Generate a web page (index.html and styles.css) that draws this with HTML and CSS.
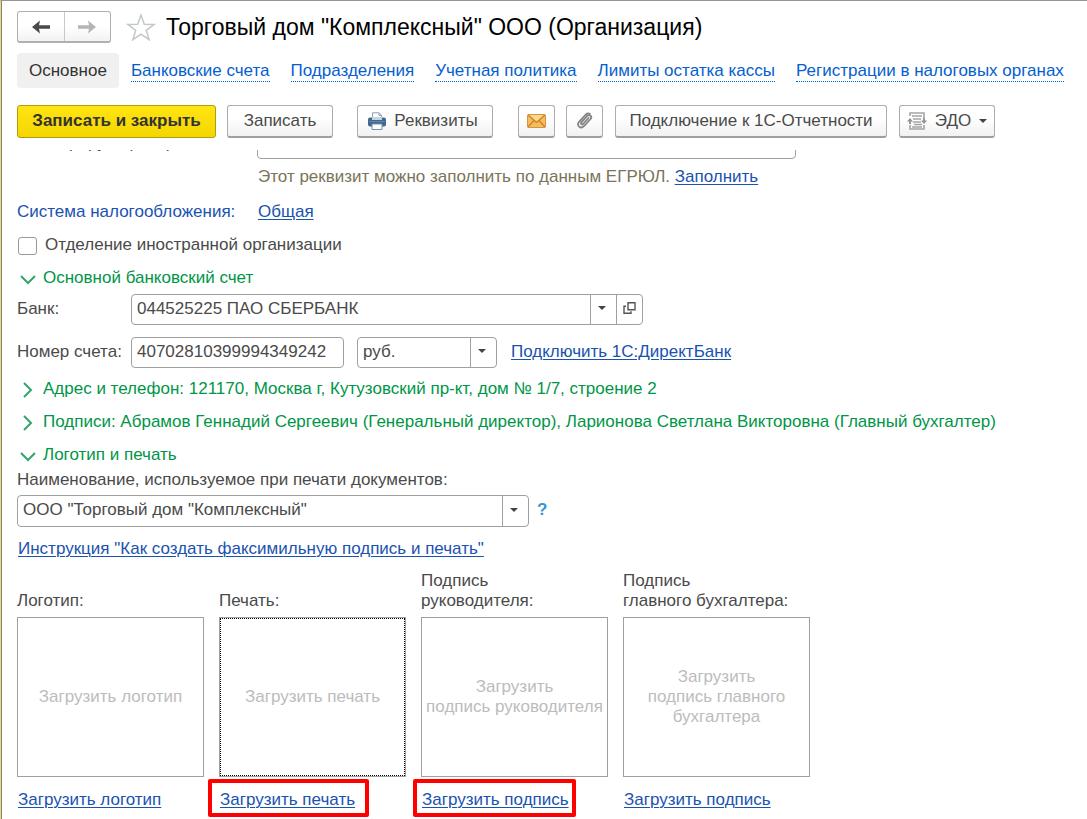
FILE: index.html
```html
<!DOCTYPE html>
<html lang="ru">
<head>
<meta charset="utf-8">
<meta name="viewport" content="width=device-width, initial-scale=1">
<title>Торговый дом "Комплексный" ООО (Организация)</title>
<link rel="stylesheet" href="styles.css">
</head>
<body>
<div class="window">
  <header class="titlebar">
    <div class="history">
      <button class="history-btn" type="button" aria-label="Назад"><svg width="18" height="14" viewBox="0 0 18 14"><path d="M0 7l8-6.500L7 5.200h11v3.600H7l1 4.700z" fill="#4a4a4a"/></svg></button>
      <button class="history-btn" type="button" aria-label="Вперед"><svg width="18" height="14" viewBox="0 0 18 14"><path d="M18 7l-8-6.500 1 4.700H0v3.600h11l-1 4.700z" fill="#b5b5b5"/></svg></button>
    </div>
    <button class="star" type="button" aria-label="В избранное"><svg width="30" height="28" viewBox="0 0 30 28"><path d="M15 2l3.300 9.200 10 .2-8 6 2.800 9.300-8.100-5.600-8.100 5.600 2.800-9.300-8-6 10-.2z" fill="#fff" stroke="#c3c8c8" stroke-width="1.500"/></svg></button>
    <h1 class="title">Торговый дом "Комплексный" ООО (Организация)</h1>
  </header>

  <nav class="tabs">
    <span class="tab-current">Основное</span>
    <a class="tab" href="#">Банковские счета</a>
    <a class="tab" href="#">Подразделения</a>
    <a class="tab" href="#">Учетная политика</a>
    <a class="tab" href="#">Лимиты остатка кассы</a>
    <a class="tab" href="#">Регистрации в налоговых органах</a>
  </nav>

  <div class="toolbar">
    <button class="btn btn-primary" type="button">Записать и закрыть</button>
    <button class="btn btn-save" type="button">Записать</button>
    <button class="btn btn-print" type="button"><svg width="18" height="18" viewBox="0 0 18 18"><path d="M4.500 7V.8h6.500l2.500 2.500V7" fill="#fff" stroke="#8ba0b5"/><path d="M11 .8v2.700h2.500" fill="none" stroke="#8ba0b5"/><rect x="0" y="5.500" width="18" height="9" rx="2" fill="#41698f"/><path d="M4 5h10v3H4z" fill="#c3d3e2"/><path d="M1.500 9.500h15" stroke="#6288ac"/><path d="M4 12h10v5.500H4z" fill="#fff" stroke="#7890a8"/></svg>Реквизиты</button>
    <div class="icon-group">
      <button class="btn btn-icon" type="button" aria-label="Написать письмо"><svg width="19" height="14" viewBox="0 0 19 14"><rect x=".5" y=".5" width="18" height="13" rx="1" fill="#f5bd5e" stroke="#d5933b"/><path d="M1 1l8.500 7.500L18 1M1 13l6-6.500M18 13l-6-6.500" fill="none" stroke="#cb822b" stroke-width="1.200"/><path d="M2.500 1h14l-7 6z" fill="#ffdb91"/></svg></button>
      <button class="btn btn-icon" type="button" aria-label="Присоединенные файлы"><svg width="18" height="18" viewBox="0 0 18 18"><path d="M12.500 6l-5.500 6c-1.100 1.100-2.700-.4-1.700-1.600L11.200 4c2.400-2.300 5.400.6 3.300 3L8 14.200c-3.400 3.300-8-.9-4.800-4.500l6.600-7.200c1.300-1.300 2.700-1.500 4-.7" fill="none" stroke="#858585" stroke-width="1.800" stroke-linecap="round"/></svg></button>
    </div>
    <button class="btn btn-report" type="button">Подключение к 1С-Отчетности</button>
    <button class="btn btn-edo" type="button"><svg width="20" height="18" viewBox="0 0 20 18"><path d="M3 4V1h14v5M3 13v4h14v-4" fill="none" stroke="#a5a5a5" stroke-width="1.600"/><path d="M5 4h10M6 7h8M6 10h8M7 12.500h8M5 15h10" stroke="#a5a5a5" stroke-width="1.500"/><path d="M3 12V8M17 6v4" stroke="#999" stroke-width="2"/><path d="M0 9.500L3 6l3 3.500zM14 8.500h6L17 12z" fill="#949494"/></svg>ЭДО<span class="caret"></span></button>
  </div>

  <main class="form">
    <div class="cut-row"><label class="label-wide" for="reg">Регистрирующий орган:</label><input class="reg-input" id="reg" type="text"></div>
    <p class="hint">Этот реквизит можно заполнить по данным ЕГРЮЛ. <a class="link" href="#">Заполнить</a></p>
    <div class="tax-row"><span class="label-wide">Система налогообложения:</span><a class="link" href="#">Общая</a></div>
    <div class="check-row"><input class="check" id="foreign" type="checkbox"><label for="foreign">Отделение иностранной организации</label></div>

    <button class="group" type="button" aria-expanded="true"><svg class="chev" viewBox="0 0 18 18"><path d="M4 7l7 7 7-7" fill="none" stroke="#36a36c" stroke-width="2"/></svg>Основной банковский счет</button>
    <div class="row bank-row">
      <label class="label" for="bank">Банк:</label>
      <div class="field bank"><input class="input" id="bank" type="text" value="044525225 ПАО СБЕРБАНК"><button class="field-btn" type="button" aria-label="Выбрать банк"><span class="caret"></span></button><button class="field-btn" type="button" aria-label="Открыть"><svg width="13" height="12" viewBox="0 0 13 12"><path d="M5 .8h7v7H5zM3 4.200H1v7h7v-2" fill="none" stroke="#555" stroke-width="1.400"/></svg></button></div>
    </div>
    <div class="row account-row">
      <label class="label" for="account">Номер счета:</label>
      <div class="field account"><input class="input" id="account" type="text" value="40702810399994349242"></div>
      <div class="field currency"><input class="input" type="text" value="руб." aria-label="Валюта"><button class="field-btn" type="button" aria-label="Выбрать валюту"><span class="caret"></span></button></div>
      <a class="link" href="#">Подключить 1С:ДиректБанк</a>
    </div>
    <button class="group" type="button" aria-expanded="false"><svg class="chev" viewBox="0 0 18 18"><path d="M7 3l7 7-7 7" fill="none" stroke="#36a36c" stroke-width="2"/></svg>Адрес и телефон: 121170, Москва г, Кутузовский пр-кт, дом № 1/7, строение 2</button>
    <button class="group" type="button" aria-expanded="false"><svg class="chev" viewBox="0 0 18 18"><path d="M7 3l7 7-7 7" fill="none" stroke="#36a36c" stroke-width="2"/></svg>Подписи: Абрамов Геннадий Сергеевич (Генеральный директор), Ларионова Светлана Викторовна (Главный бухгалтер)</button>
    <button class="group" type="button" aria-expanded="true"><svg class="chev" viewBox="0 0 18 18"><path d="M4 7l7 7 7-7" fill="none" stroke="#36a36c" stroke-width="2"/></svg>Логотип и печать</button>

    <label class="name-label" for="print-name">Наименование, используемое при печати документов:</label>
    <div class="row">
      <div class="field print-name"><input class="input" id="print-name" type="text" value="ООО &quot;Торговый дом &quot;Комплексный&quot;"><button class="field-btn" type="button" aria-label="Выбрать наименование"><span class="caret"></span></button></div>
      <button class="help" type="button">?</button>
    </div>
    <p class="guide"><a class="link" href="#">Инструкция "Как создать факсимильную подпись и печать"</a></p>

    <div class="images">
      <section class="image"><h2 class="image-label">Логотип:</h2><button class="drop" type="button">Загрузить логотип</button><a class="link" href="#">Загрузить логотип</a></section>
      <section class="image"><h2 class="image-label">Печать:</h2><button class="drop drop-focused" type="button">Загрузить печать</button><a class="link marked" href="#">Загрузить печать</a></section>
      <section class="image"><h2 class="image-label">Подпись<br>руководителя:</h2><button class="drop" type="button">Загрузить<br>подпись руководителя</button><a class="link marked marked-tight" href="#">Загрузить подпись</a></section>
      <section class="image"><h2 class="image-label">Подпись<br>главного бухгалтера:</h2><button class="drop" type="button">Загрузить<br>подпись главного<br>бухгалтера</button><a class="link" href="#">Загрузить подпись</a></section>
    </div>
  </main>
</div>
</body>
</html>
```
FILE: styles.css
```css
* { box-sizing: border-box; }
body { margin: 0; background: #fff; color: #4a4a4a; font: 17px/20px "Liberation Sans", Arial, sans-serif; }
button, input { font: inherit; color: inherit; }
button { cursor: pointer; }
p, h1, h2 { margin: 0; font-weight: normal; }
svg { flex: none; }

.window {
  min-height: 100vh;
  overflow: hidden;
  padding: 10px 0 0 16px;
  border-top: 1px solid #969696;
  border-left: 1px solid #e8d98c;
  box-shadow: inset 1px 0 0 #8c8460;
}

.titlebar { display: flex; align-items: center; height: 32px; }
.history { display: flex; width: 94px; height: 32px; border: 1px solid #b0b0b0; border-bottom: 2px solid #b0b0b0; border-radius: 3px; background: linear-gradient(#fff 50%, #f2f2f2); }
.history-btn { flex: 1; display: flex; align-items: center; justify-content: center; padding: 0; border: 0; background: none; }
.history-btn + .history-btn { border-left: 1px solid #c8c8c8; }
.star { display: flex; margin-left: 15px; padding: 0; border: 0; background: none; }
.title { margin-left: 10px; color: #000; font-size: 23px; line-height: 32px; white-space: nowrap; }

.tabs { display: flex; align-items: center; gap: 21px; margin-top: 10px; white-space: nowrap; }
.tab-current { margin-right: -9px; padding: 8px 12px 7px; border-radius: 4px; background: #f0f0f0; color: #333; }
.tab { padding-top: 2px; border-bottom: 1px dotted #0560cf; color: #0560cf; text-decoration: none; }

.toolbar { display: flex; align-items: center; margin-top: 17px; white-space: nowrap; }
.btn { display: flex; align-items: center; justify-content: center; height: 33px; padding: 0; border: 1px solid #adadad; border-bottom: 2px solid #9e9e9e; border-radius: 3px; background: linear-gradient(#fff 40%, #f1f1f1); }
.btn-primary { width: 199px; border-color: #b09c14; border-bottom-width: 1px; padding-bottom: 1px; background: linear-gradient(#ffe513, #f4d500); color: #333; font-weight: bold; }
.btn-save { width: 106px; margin-left: 11px; }
.btn-print { width: 136px; margin-left: 24px; gap: 8px; padding-right: 4px; }
.icon-group { display: flex; gap: 11px; margin: 0 12px 0 25px; }
.btn-icon { width: 37px; }
.btn-report { width: 272px; }
.btn-edo { width: 96px; margin-left: 12px; gap: 8px; }
.caret { border: 4px solid transparent; border-top-color: #444; border-bottom: 0; }

.form { margin-top: 12px; }
.cut-row { display: flex; align-items: flex-end; height: 9px; overflow: hidden; }
.label-wide { flex: none; width: 240px; }
.cut-row .label-wide { margin-bottom: 6px; }
.reg-input { width: 539px; height: 32px; border: 1px solid #a0a0a0; border-radius: 4px; }
.hint { margin: 8px 0 0 241px; color: #7a745a; }
.link { color: #1a52b0; text-decoration: underline; text-decoration-thickness: 1px; text-underline-offset: 2px; }
.tax-row { display: flex; margin-top: 15px; color: #1a52b0; }
.tax-row .label-wide { width: 241px; }
.check-row { display: flex; align-items: center; gap: 8px; margin-top: 13px; }
.check { appearance: none; width: 19px; height: 18px; margin: 1px 0 0 1px; border: 1px solid #999; border-radius: 3px; background: #fff; }

.group { display: flex; align-items: center; gap: 8px; margin-top: 13px; padding: 0; border: 0; background: none; color: #009646; text-align: left; white-space: nowrap; }
.chev { width: 18px; height: 18px; overflow: visible; }
.row { display: flex; align-items: center; }
.bank-row { margin-top: 6px; }
.account-row { margin: 12px 0 -2px; }
.label { width: 114px; padding-bottom: 2px; white-space: nowrap; }
.field { display: flex; height: 31px; border: 1px solid #a0a0a0; border-radius: 4px; background: #fff; }
.input { flex: 1; min-width: 0; padding: 0 5px 2px; border: 0; background: none; outline: 0; }
.field-btn { display: flex; align-items: center; justify-content: center; width: 26px; padding: 0 4px 3px 0; border: 0; border-left: 1px solid #a0a0a0; background: none; }
.field-btn svg { margin-left: 4px; }
.bank { width: 512px; }
.account { width: 213px; }
.currency { width: 140px; margin: 0 14px 0 13px; }
.account-row .link { padding-bottom: 2px; }
.name-label { display: block; margin: 5px 0; }
.print-name { width: 512px; height: 32px; }
.help { margin-left: 8px; padding: 0 0 2px; border: 0; background: none; color: #3b93d3; font-weight: bold; }
.guide { margin: 12px 0 12px 1px; }

.images { display: flex; gap: 15px; }
.image { display: flex; flex-direction: column; align-items: flex-start; width: 187px; }
.image-label { display: flex; align-items: flex-end; height: 40px; font-size: 17px; white-space: nowrap; }
.drop { width: 100%; height: 160px; margin: 6px 0 13px; padding: 0; border: 1px solid #a0a0a0; background: #fff; color: #bcbcbc; white-space: nowrap; }
.drop-focused { outline: 1px dotted #000; outline-offset: -2px; }
.image .link { margin-left: 1px; }
.marked { position: relative; }
.marked::after { content: ""; position: absolute; inset: -11px -14px -7px -12px; border: 4px solid #f00; border-radius: 2px; }
.marked-tight::after { inset: -11px -7px -7px -9px; }
```
